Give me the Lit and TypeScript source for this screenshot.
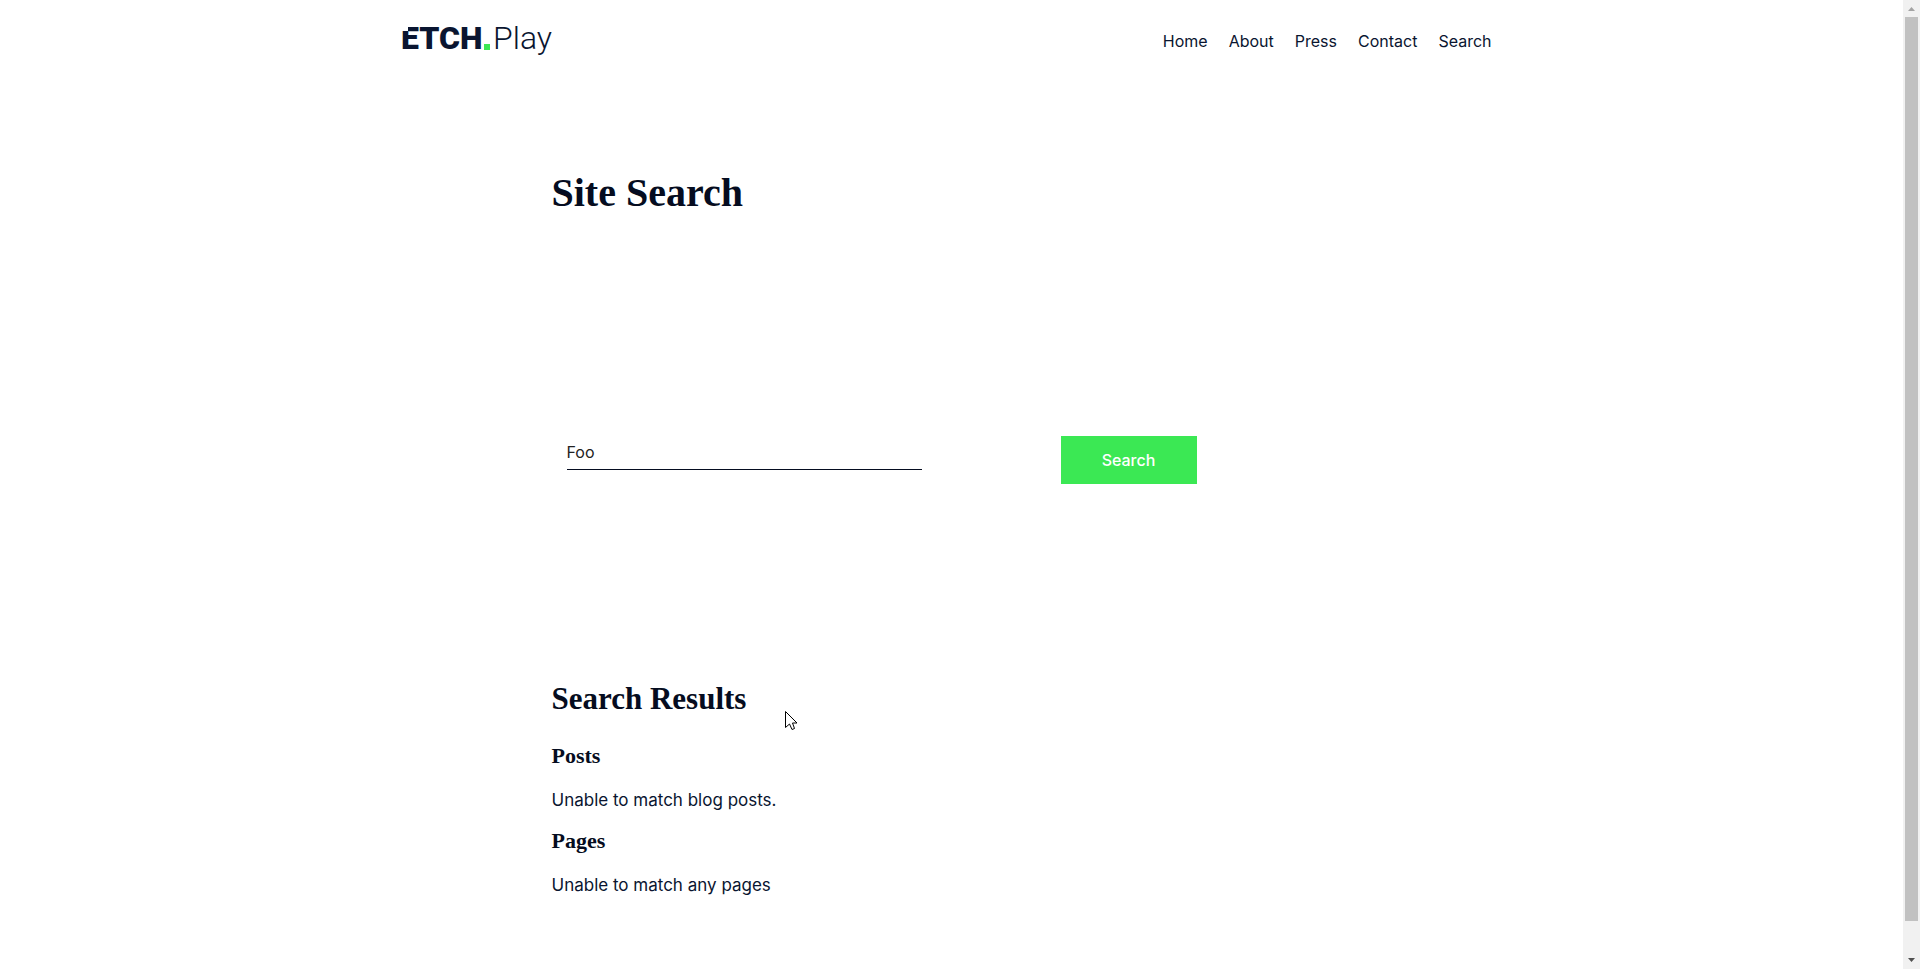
import { LitElement, html, css } from "lit";
import { customElement, property } from "lit/decorators.js";

@customElement("site-header")
class SiteHeader extends LitElement {
  static styles = css`
    :host { display: block; }
    .bar { display: flex; justify-content: space-between; align-items: center; max-width: 1100px; height: 80px; margin: 0 auto; }
    .logo { display: block; color: #0a1530; text-decoration: none; }
    .logo svg { display: block; }
    .etch { font: 900 32px Roboto, sans-serif; }
    .play { font: 300 32px Roboto, sans-serif; }
    nav { display: flex; gap: 21px; padding: 2px 10px 0 0; }
    nav a { color: #0a1530; font-size: 16px; line-height: 24px; text-decoration: none; }
  `;
  render() {
    return html`<header class="bar">
      <a class="logo" href="#" aria-label="Etch Play">
        <svg width="156" height="44" viewBox="0 0 156 44" fill="currentColor">
          <text class="etch" x="-1" y="31">ETCH</text>
          <path d="M0 7h6v6H0z" fill="#fff" />
          <rect x="82" y="26" width="6" height="6" fill="#3be854" />
          <text class="play" x="91" y="31">Play</text>
        </svg>
      </a>
      <nav>
        ${["Home", "About", "Press", "Contact", "Search"].map((t) => html`<a href="#">${t}</a>`)}
      </nav>
    </header>`;
  }
}

@customElement("result-group")
class ResultGroup extends LitElement {
  @property() heading = "";
  @property() message = "";
  static styles = css`
    :host { display: block; }
    h3 { margin: 0; font: 700 22px/29px "Liberation Serif", serif; color: #050c20; }
    p { margin: 16px 0 12px; font-size: 17px; line-height: 28px; }
  `;
  render() {
    return html`<h3>${this.heading}</h3><p>${this.message}</p>`;
  }
}

@customElement("app-root")
class AppRoot extends LitElement {
  static styles = css`
    :host { display: flex; min-height: 100vh; background: #fff; color: #0a1530; font-family: Inter, sans-serif; }
    .page { flex: 1; min-width: 0; }
    main { max-width: 800px; margin: 0 auto; }
    h1 { margin: 0; padding: 85px 0 215px; font: 700 40px/56px "Liberation Serif", serif; color: #050c20; }
    form { display: flex; align-items: flex-start; gap: 139px; padding: 0 15px; }
    input { flex: 0 1 355px; box-sizing: border-box; min-width: 0; height: 34px; padding: 0 0 2px; border: 0; border-bottom: 1px solid #050c20; border-radius: 0; outline: 0; background: none; color: #222; font: 16px Inter, sans-serif; }
    button { width: 136px; height: 48px; padding: 0; border: 0; background: #3be854; color: #fff; font: 500 16px Inter, sans-serif; }
    .results { padding-top: 194px; }
    h2 { margin: 0 0 21px; font: 700 31px/42px "Liberation Serif", serif; color: #050c20; }
    .scroll { display: flex; flex-direction: column; width: 17px; background: #f1f1f1; }
    .scroll svg { display: block; flex: none; }
    .thumb { flex: 904; margin: 0 2px; background: #c1c1c1; }
    .rest { flex: 31; }
    .cursor { position: absolute; left: 785px; top: 710px; }
  `;
  render() {
    return html`
      <div class="page">
        <site-header></site-header>
        <main>
          <h1>Site Search</h1>
          <form @submit=${(e: Event) => e.preventDefault()}>
            <input type="text" aria-label="Search term" value="Foo" />
            <button>Search</button>
          </form>
          <section class="results">
            <h2>Search Results</h2>
            <result-group heading="Posts" message="Unable to match blog posts."></result-group>
            <result-group heading="Pages" message="Unable to match any pages"></result-group>
          </section>
        </main>
      </div>
      <div class="scroll" aria-hidden="true">
        <svg width="17" height="17"><path d="M5 11h7L8.500 7z" fill="#a3a3a3" /></svg>
        <div class="thumb"></div>
        <div class="rest"></div>
        <svg width="17" height="17"><path d="M5 6h7L8.500 10z" fill="#505050" /></svg>
      </div>
      <svg class="cursor" width="13" height="21" aria-hidden="true">
        <path d="M.5 1.500V17.500L4.500 14L7 19.500L9.500 18.500L7.500 13H12z" fill="#fff" stroke="#000" />
      </svg>
    `;
  }
}
